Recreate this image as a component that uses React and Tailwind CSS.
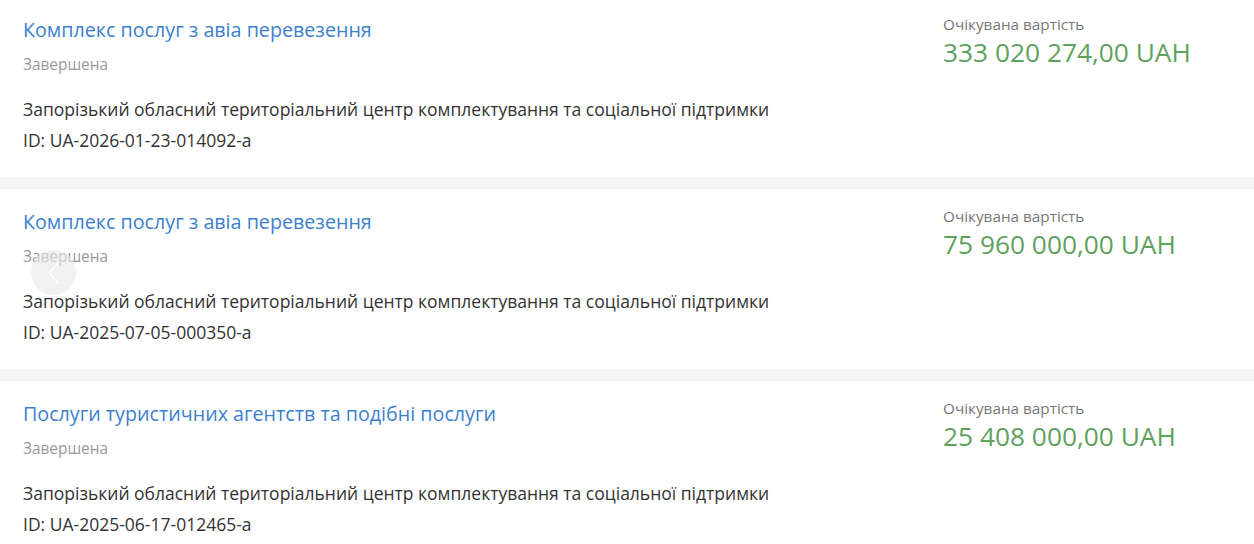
import React from "react";

const items = [
  {
    title: "Комплекс послуг з авіа перевезення",
    id: "UA-2026-01-23-014092-a",
    price: "333 020 274,00 UAH",
    first: true,
  },
  {
    title: "Комплекс послуг з авіа перевезення",
    id: "UA-2025-07-05-000350-a",
    price: "75 960 000,00 UAH",
  },
  {
    title: "Послуги туристичних агентств та подібні послуги",
    id: "UA-2025-06-17-012465-a",
    price: "25 408 000,00 UAH",
  },
];

function Card({ item }) {
  return (
    <div
      className={
        "flex bg-white pl-[23px] pb-[25px] " +
        (item.first ? "pt-[16px]" : "pt-[19px]")
      }
    >
      <div className="flex-1 flex flex-col items-start">
        <a className="text-[19.7px] leading-[28px] text-[#3d7fcf] cursor-pointer">
          {item.title}
        </a>
        <div className="mt-[10px] text-[15.4px] leading-[22px] text-[#9a9a9a]">
          Завершена
        </div>
        <div className="mt-[21px] text-[17.5px] leading-[24px] text-[#333]">
          Запорізький обласний територіальний центр комплектування та соціальної підтримки
        </div>
        <div className="mt-[7px] text-[17.5px] leading-[24px] text-[#333]">
          ID: {item.id}
        </div>
      </div>
      <div className="w-[311px] flex flex-col -mt-[3px]">
        <div className="text-[15.3px] leading-[22px] text-[#777]">Очікувана вартість</div>
        <div className="text-[26.3px] leading-[34px] text-[#5ea25e]">{item.price}</div>
      </div>
    </div>
  );
}

export default function App() {
  return (
    <div
      className="relative w-[1254px] h-[544px] overflow-hidden bg-[#f5f5f5] flex flex-col gap-[12px]"
      style={{ fontFamily: '"Open Sans", "Noto Sans", sans-serif' }}
    >
      {items.map((it, i) => (
        <Card key={i} item={it} />
      ))}
      <div className="absolute left-[31px] top-[250px] w-[45px] h-[45px] rounded-full bg-[#e8e8e8]/60 flex items-center justify-center">
        <svg width="14" height="26" viewBox="0 0 14 26" fill="none">
          <path d="M12 2 L2 13 L12 24" stroke="#ffffff" strokeWidth="1.5" />
        </svg>
      </div>
    </div>
  );
}
